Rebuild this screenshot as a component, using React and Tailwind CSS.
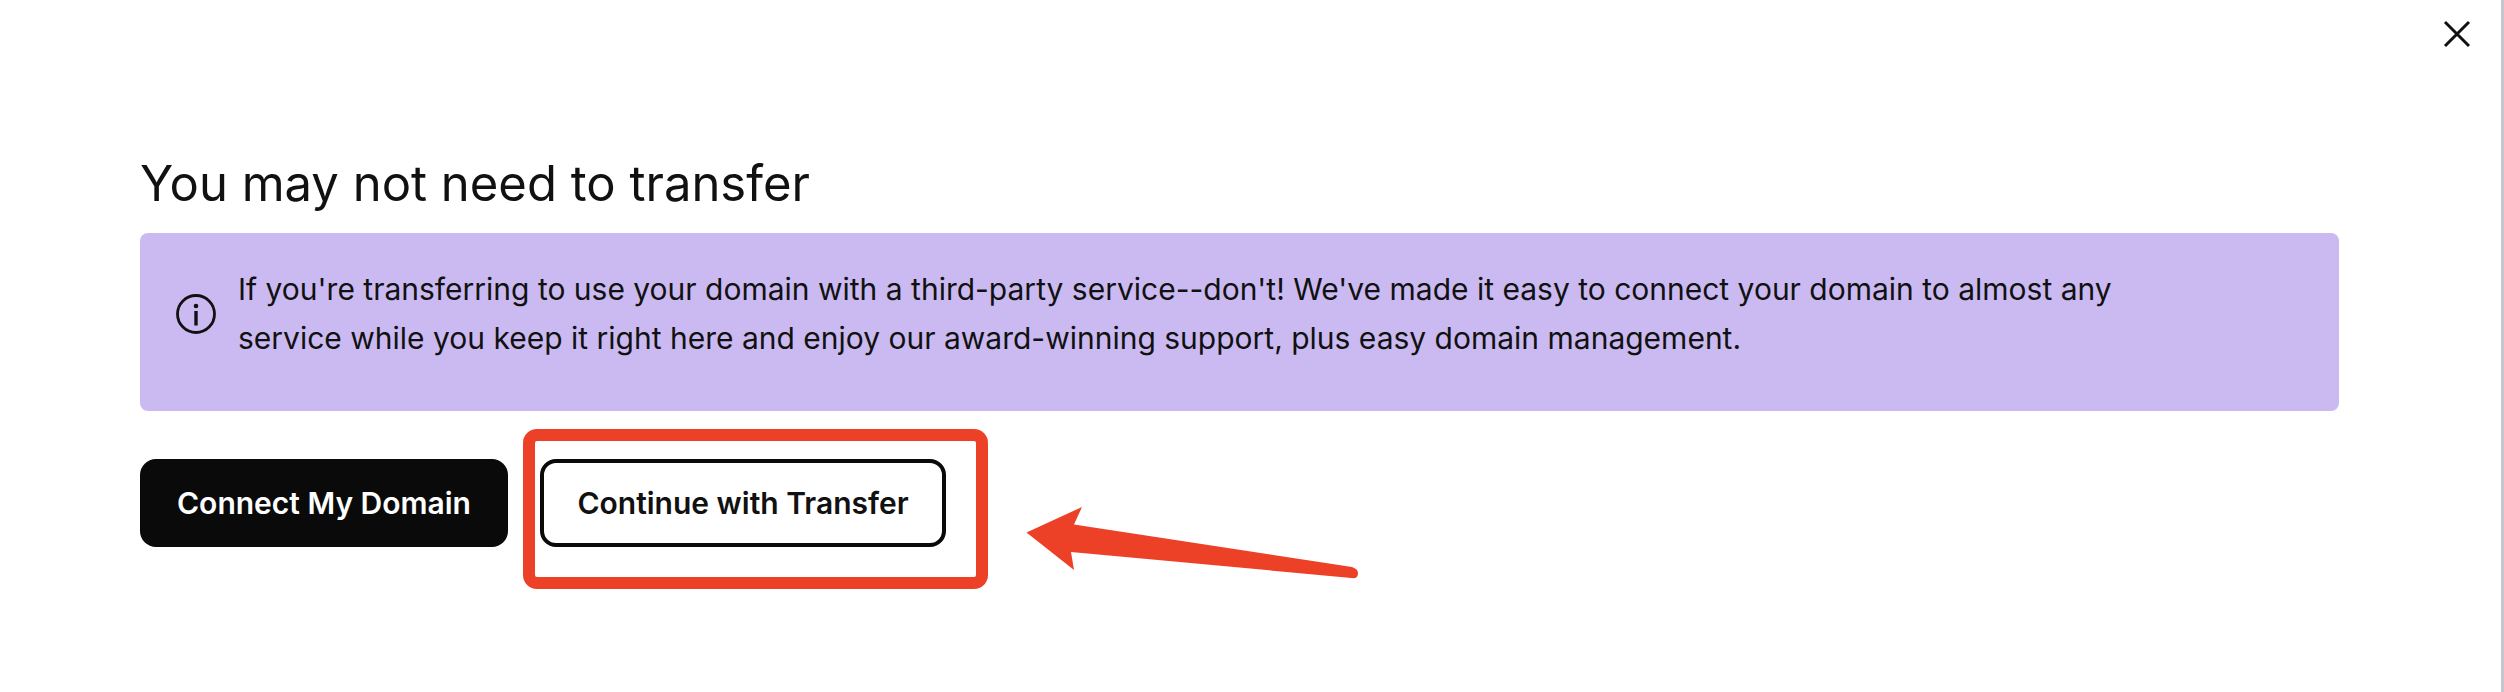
import React from "react";

function CloseIcon() {
  return (
    <svg viewBox="0 0 28 28" className="size-7" fill="none" stroke="#111111" strokeWidth="3" aria-hidden="true">
      <path d="M2 2 26 26M26 2 2 26" />
    </svg>
  );
}

function InfoIcon() {
  return (
    <svg viewBox="0 0 40 40" className="size-10 shrink-0" fill="none" stroke="#111111" aria-hidden="true">
      <circle cx="20" cy="20" r="18.5" strokeWidth="2.8" />
      <path d="M20 17V31.5" strokeWidth="3.4" />
      <circle cx="20" cy="12" r="2.3" fill="#111111" stroke="none" />
    </svg>
  );
}

function Arrow() {
  return (
    <svg
      viewBox="0 0 334 74"
      className="pointer-events-none absolute top-12 left-full ml-20 h-[74px] w-[334px]"
      fill="#ec4127"
      aria-hidden="true"
    >
      <path d="M0.500 25.500 56 0 48 17.500 326 60 Q332 62 332 66 Q332 71 328 71.200 L45 45 48 63Z" />
    </svg>
  );
}

export default function App() {
  return (
    <main className="relative min-h-screen border-r-3 border-[#c3c8cf] bg-white px-35 pt-[154px] pb-16 font-['Inter','Liberation_Sans',sans-serif] text-[#111111]">
      <button type="button" aria-label="Close" className="absolute top-5 right-[30px] cursor-pointer">
        <CloseIcon />
      </button>

      <h1 className="text-[49px] leading-[60px]">You may not need to transfer</h1>

      <section className="mt-[19px] mr-[22px] rounded-lg bg-[#cbbaf2] px-9 pt-8 pb-12">
        <div className="flex items-center gap-[22px]">
          <InfoIcon />
          <p className="max-w-[1940px] text-[30px] leading-[49px]">
            If you're transferring to use your domain with a third-party service--don't! We've made it easy to connect
            your domain to almost any service while you keep it right here and enjoy our award-winning support, plus
            easy domain management.
          </p>
        </div>
      </section>

      <div className="mt-12 flex gap-8">
        <button
          type="button"
          className="h-22 min-w-92 cursor-pointer rounded-2xl bg-[#0a0a0a] px-8 text-[30px] font-semibold text-white"
        >
          Connect My Domain
        </button>
        <div className="relative">
          <button
            type="button"
            className="h-22 min-w-[406px] cursor-pointer rounded-2xl border-4 border-[#0a0a0a] bg-white px-8 text-[30px] font-semibold"
          >
            Continue with Transfer
          </button>
          <div className="pointer-events-none absolute -top-[30px] -right-[42px] -bottom-[42px] -left-[17px] rounded-[14px] border-12 border-[#ec4127]" />
          <Arrow />
        </div>
      </div>
    </main>
  );
}
